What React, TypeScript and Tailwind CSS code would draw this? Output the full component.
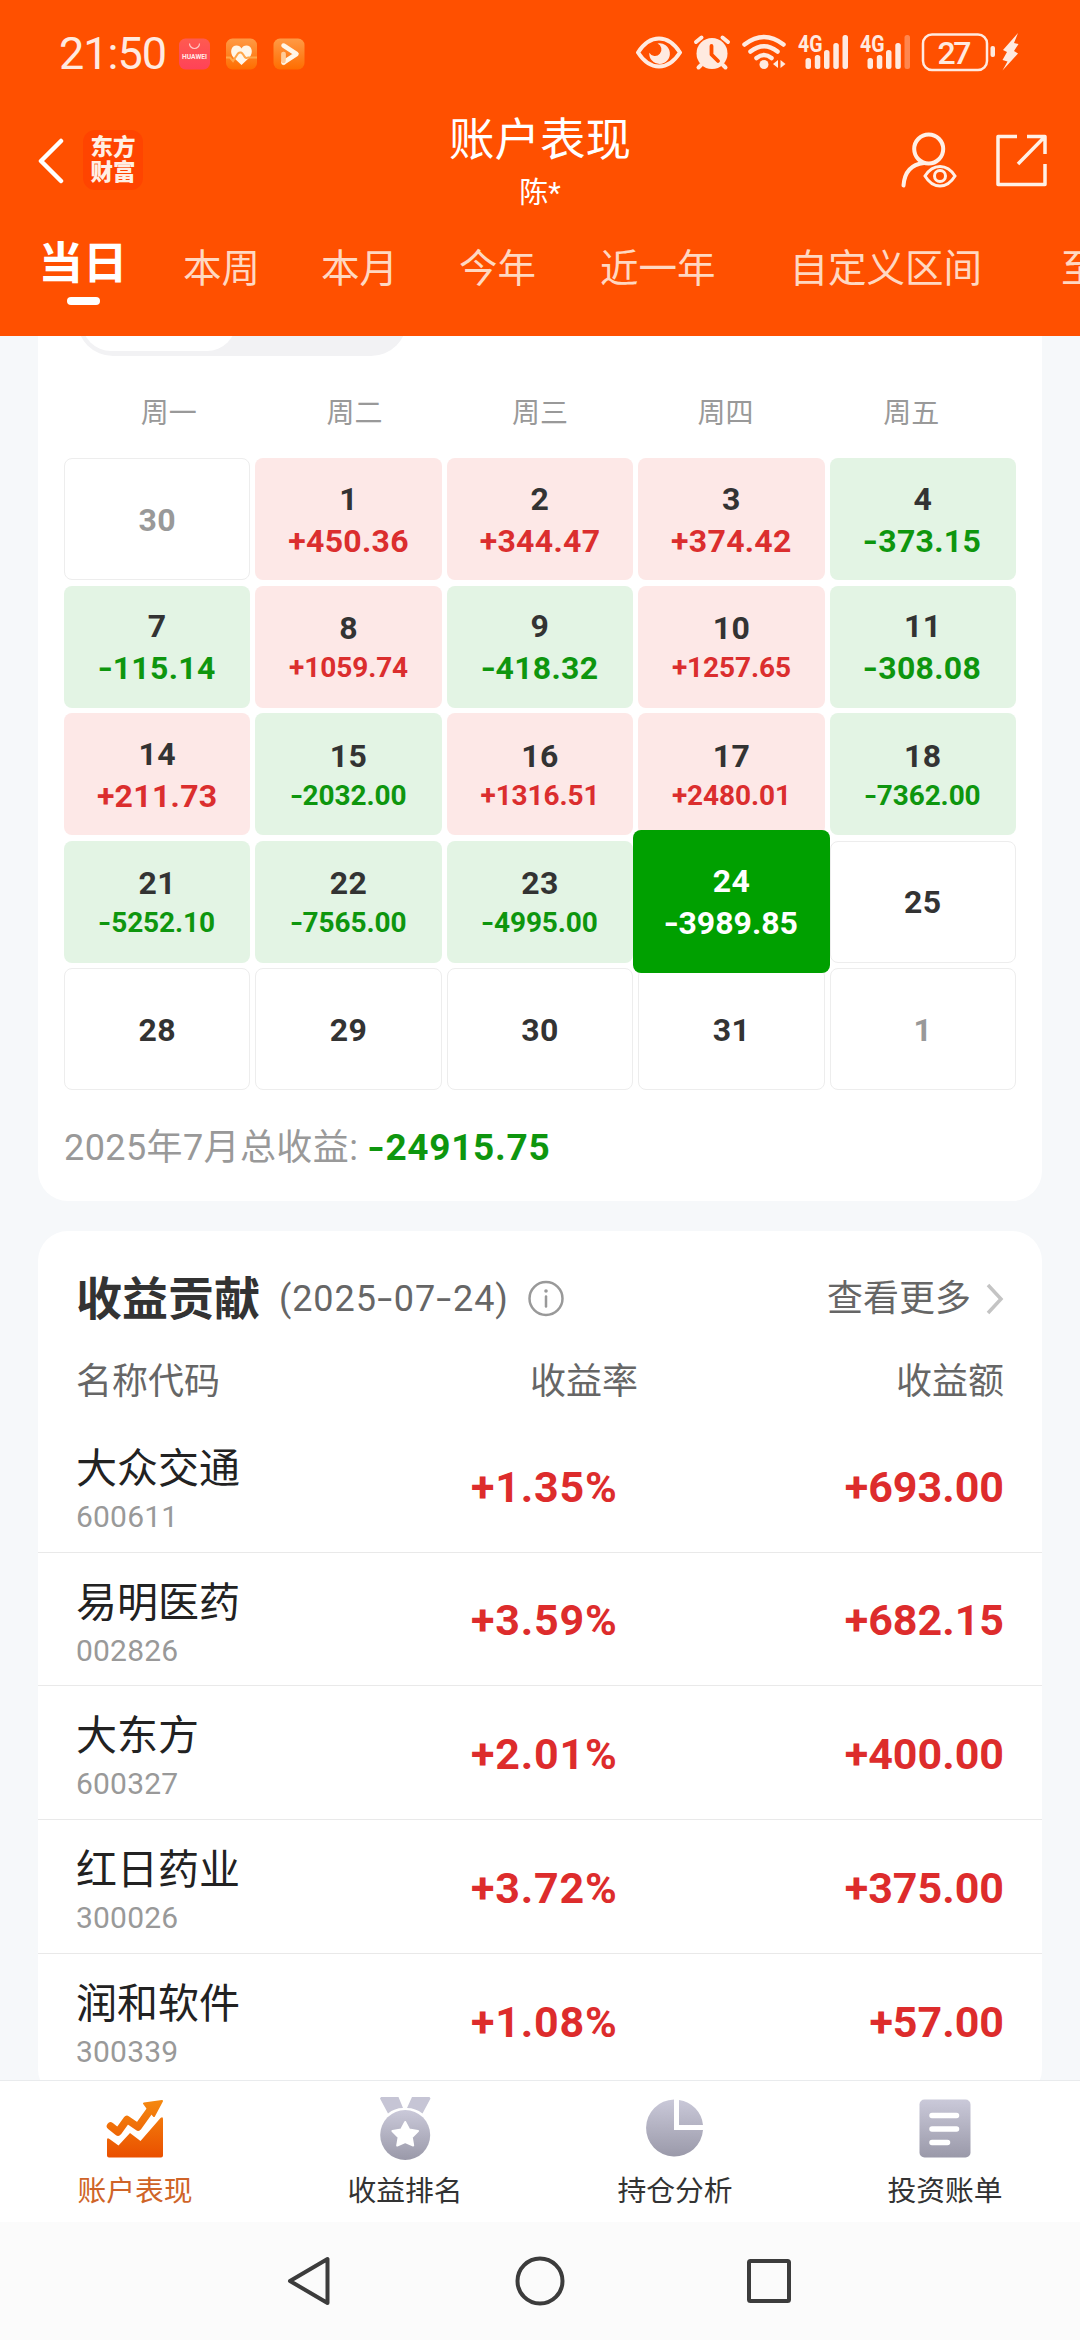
import React from "react";

const CJK = "font-['Roboto','Noto_Sans_CJK_SC',sans-serif]";

function StatusBar() {
  return (
    <div className="relative flex h-[108px] items-center justify-between pl-[59px] pr-[60px] text-[#ffeae0]">
      <div className="flex items-center">
        <span className="w-[120px] text-[45px] leading-[50px] tracking-[-1px]">21:50</span>
        <svg className="h-8 w-[126px]" viewBox="0 0 126 32">
          <defs>
            <linearGradient id="app" x1="0" y1="0" x2="0" y2="1">
              <stop offset="0" stopColor="#ff9a45" />
              <stop offset="1" stopColor="#ff6d00" />
            </linearGradient>
            <linearGradient id="shop" x1="0" y1="0" x2="0" y2="1">
              <stop offset="0" stopColor="#ff5a50" />
              <stop offset="1" stopColor="#ff4258" />
            </linearGradient>
          </defs>
          <rect x="0" y="0.5" width="31" height="31" rx="6.5" fill="url(#shop)" />
          <path d="M10.5 5.5a5 5 0 0 0 10 0" fill="none" stroke="#ffc9c4" strokeWidth="1.2" />
          <text x="15.5" y="20.5" textAnchor="middle" fontSize="6.3" fontWeight="700" fill="#ffe9e6" textLength="25" lengthAdjust="spacingAndGlyphs">HUAWEI</text>
          <rect x="47" y="0.5" width="31" height="31" rx="6.5" fill="url(#app)" />
          <path d="M62.500 27L54.500 19.500C50 14 52.500 7.500 57.500 7.500c2.500 0 4 1.200 5 3 1-1.800 2.500-3 5-3 5 0 7.500 6.500 3 12z" fill="#fff6e8" />
          <path d="M47 19.500h4l3 3.500 5-7.500c2-2 4-1 5.500 1.500 1.500 3 3 3.500 4.500 2.500h9" fill="none" stroke="#ffa648" strokeWidth="2" />
          <rect x="94.500" y="0.500" width="31" height="31" rx="6.500" fill="url(#app)" />
          <path d="M104.500 16v9" fill="none" stroke="#ffb56e" strokeWidth="4.500" strokeLinecap="round" />
          <path d="M104.500 7.500L117.500 16L104.500 24.500" fill="none" stroke="#fff6e8" strokeWidth="4.500" strokeLinecap="round" strokeLinejoin="round" />
          <path d="M104.500 16v7" fill="none" stroke="#ffcb98" strokeWidth="4.500" strokeLinecap="round" />
        </svg>
      </div>
      <svg className="h-[42px] w-[384px]" viewBox="635 33 384 42" fill="none" stroke="#ffeae0">
        <path d="M637 52.500q9-14 21-14t21 14q-9 14-21 14T637 52.500z" strokeWidth="4" strokeLinejoin="round" />
        <path d="M656.500 43.500a6.500 6.500 0 1 1-8.200 9.200a10.300 10.300 0 1 0 8.200-9.200z" fill="#ffeae0" stroke="none" />
        <g>
          <circle cx="711" cy="53.500" r="15.500" fill="#ffeae0" stroke="none" />
          <path d="M695 42l5.500-4.500M727 42l-5.500-4.500M700 65l-2.500 2.500M722 65l2.500 2.500" strokeWidth="4" strokeLinecap="round" />
          <path d="M710.500 46v8.500l6.500 6.500" stroke="#ff5000" strokeWidth="3.800" strokeLinecap="round" strokeLinejoin="round" />
        </g>
        <g strokeWidth="4.500" strokeLinecap="round">
          <path d="M743.500 44.500q19.500-15 39 0M749.500 51.500q13.500-10.500 27 0M755.500 58q7.500-6 15 0" />
          <circle cx="763" cy="64.500" r="4.500" fill="#ffeae0" stroke="none" />
          <path d="M777 60v8l-5-4zM779.500 68v-8l5 4z" fill="#ffeae0" stroke="none" />
        </g>
        <g stroke="none" fill="#ffeae0">
          <text x="797" y="51.500" fontSize="23" fontWeight="700" textLength="24.500" lengthAdjust="spacingAndGlyphs">4G</text>
          <rect x="804.500" y="58" width="5.500" height="11" rx="2.500" />
          <rect x="813.800" y="55" width="5.500" height="14" rx="2.500" />
          <rect x="823" y="50" width="5.500" height="19" rx="2.500" />
          <rect x="832.300" y="43" width="5.500" height="26" rx="2.500" />
          <rect x="841.500" y="35" width="5.500" height="34" rx="2.500" />
          <text x="859" y="51.500" fontSize="23" fontWeight="700" textLength="24.500" lengthAdjust="spacingAndGlyphs">4G</text>
          <rect x="866.500" y="58" width="5.500" height="11" rx="2.500" />
          <rect x="875.800" y="55" width="5.500" height="14" rx="2.500" />
          <rect x="885" y="50" width="5.500" height="19" rx="2.500" />
          <rect x="894.300" y="43" width="5.500" height="26" rx="2.500" />
          <rect x="903.500" y="35" width="5.500" height="34" rx="2.500" opacity="0.35" />
          <text x="953.500" y="63.500" textAnchor="middle" fontSize="32" fontWeight="500" textLength="34">27</text>
          <rect x="989.500" y="46" width="4.500" height="11" rx="2" />
          <path d="M1017 33l-15 17 4 2-4.500 8 5 1.500-5 9 15.500-17-4-2.500 4.500-7-4.500-1z" />
        </g>
        <rect x="922" y="34.500" width="64" height="35.500" rx="9" strokeWidth="2.500" />
      </svg>
    </div>
  );
}

function Header() {
  return (
    <header className="flex h-[336px] flex-none flex-col overflow-hidden bg-[#ff5000] text-white">
      <StatusBar />
      <div className="relative flex h-[104px] items-center justify-between pl-[36px] pr-[31px]">
        <div className="flex items-center">
          <svg className="h-[48px] w-[30px]" viewBox="0 0 30 48" fill="none" stroke="#fff" strokeWidth="4.500" strokeLinecap="round" strokeLinejoin="round">
            <path d="M25 5L5 25L25 45" />
          </svg>
          <div className="ml-[17px] flex h-[60px] w-[60px] flex-col items-center justify-center rounded-xl bg-[#ff4400] text-[22.5px] leading-[25.5px] font-black text-[#ffefe4]">
            <span>东方</span>
            <span>财富</span>
          </div>
        </div>
        <div className="absolute inset-x-0 top-[3px] flex flex-col items-center">
          <h1 className="h-[59px] text-[45.500px] leading-[60px]">账户表现</h1>
          <span className="text-[29px] leading-[46px]">陈*</span>
        </div>
        <div className="flex items-center gap-[37px]">
          <svg className="h-[58px] w-[58px]" viewBox="900 131 58 58" fill="none" stroke="#fff0e6" strokeWidth="4" strokeLinecap="round">
            <circle cx="928.700" cy="149" r="14.500" />
            <path d="M903.500 185.500Q905 165 924 163" />
            <path d="M925 176q6-9.500 15-9.500t15 9.500q-6 10-15 10t-15-10z" strokeWidth="3" />
            <circle cx="940" cy="176" r="5.500" strokeWidth="3" />
          </svg>
          <svg className="h-[54px] w-[54px]" viewBox="995 133 54 54" fill="none" stroke="#fff0e6" strokeWidth="3.500" strokeLinecap="butt" strokeLinejoin="round">
            <path d="M1017 136.500H998V184.500H1045V164M1027 136.500H1045V154M1045 136.500L1018 164" />
          </svg>
        </div>
      </div>
      <nav className="flex h-[124px] pt-[29px] text-[38.500px] leading-[56px] whitespace-nowrap text-[#ffd8c2]">
        <div className="ml-[39px] flex w-[88px] flex-col items-center">
          <span className="mt-px text-[44.500px] leading-[44px] font-bold text-white">当日</span>
          <span className="mt-[11px] h-2 w-[33px] rounded-full bg-white" />
        </div>
        <span className="ml-[56px]">本周</span>
        <span className="ml-[61px]">本月</span>
        <span className="ml-[61px]">今年</span>
        <span className="ml-[64px]">近一年</span>
        <span className="ml-[74px]">自定义区间</span>
        <span className="ml-[79px]">至</span>
      </nav>
    </header>
  );
}

function Amount({ text }: { text: string }) {
  if (!text.startsWith("-")) return <>{text}</>;
  return (
    <>
      <span className="mr-[0.03em] inline-block scale-x-125">-</span>
      {text.slice(1)}
    </>
  );
}

type Day = { d: string; v?: string; muted?: boolean; selected?: boolean };

const days: Day[] = [
  { d: "30", muted: true }, { d: "1", v: "+450.36" }, { d: "2", v: "+344.47" }, { d: "3", v: "+374.42" }, { d: "4", v: "-373.15" },
  { d: "7", v: "-115.14" }, { d: "8", v: "+1059.74" }, { d: "9", v: "-418.32" }, { d: "10", v: "+1257.65" }, { d: "11", v: "-308.08" },
  { d: "14", v: "+211.73" }, { d: "15", v: "-2032.00" }, { d: "16", v: "+1316.51" }, { d: "17", v: "+2480.01" }, { d: "18", v: "-7362.00" },
  { d: "21", v: "-5252.10" }, { d: "22", v: "-7565.00" }, { d: "23", v: "-4995.00" }, { d: "24", v: "-3989.85", selected: true }, { d: "25" },
  { d: "28" }, { d: "29" }, { d: "30" }, { d: "31" }, { d: "1", muted: true },
];

function DayCell({ day }: { day: Day }) {
  const base = "flex flex-col items-center justify-center rounded-lg text-[32px] font-bold ";
  if (!day.v) {
    return (
      <div className={base + "border border-[#ededed] bg-white pt-px leading-[42px] tracking-[0.4px] " + (day.muted ? "text-[#999]" : "text-[#333]")}>{day.d}</div>
    );
  }
  if (day.selected) {
    return (
      <div className={base + "z-10 -mx-[5.500px] -my-[10.500px] bg-[#00a000] leading-[42px] text-white"}>
        <span className="tracking-[0.4px]">{day.d}</span>
        <span><Amount text={day.v} /></span>
      </div>
    );
  }
  const up = day.v.startsWith("+");
  const small = day.v.length > 7;
  return (
    <div className={base + "pt-px " + (up ? "bg-[#fde8e7]" : "bg-[#e3f4e4]")}>
      <span className="leading-[42px] tracking-[0.4px] text-[#333]">{day.d}</span>
      <span className={(small ? "text-[28px] leading-[38px] tracking-[-0.1px] " : "leading-[42px] tracking-[0.3px] ") + (up ? "text-[#db2e2e]" : "text-[#0e960e]")}>
        <Amount text={day.v} />
      </span>
    </div>
  );
}

function CalendarCard() {
  return (
    <section className="mx-[38px] h-[865px] flex-none rounded-b-[30px] bg-white">
      <div className="h-5 overflow-hidden pl-[39px]">
        <div className="-mt-[52px] h-[72px] w-[330px] rounded-full bg-[#f2f2f4] px-[5px] pt-[5px]">
          <div className="h-[62px] w-[154px] rounded-[29px] bg-white" />
        </div>
      </div>
      <div className="mx-[38px] mt-[38px] grid h-10 grid-cols-5 text-center text-[28px] leading-10 text-[#999]">
        <span>周一</span><span>周二</span><span>周三</span><span>周四</span><span>周五</span>
      </div>
      <div className="mx-[26px] mt-[24px] grid h-[632px] grid-cols-5 grid-rows-5 gap-x-[5px] gap-y-[5.500px]">
        {days.map((day, i) => <DayCell key={i} day={day} />)}
      </div>
      <div className="ml-[26px] mt-[33px] flex items-baseline text-[36px] leading-[50px] whitespace-nowrap text-[#999]">
        <span className="w-[305px] tracking-[0.4px]">2025年7月总收益:</span>
        <span className="text-[37px] font-bold tracking-[0.7px] text-[#0e960e]"><Amount text="-24915.75" /></span>
      </div>
    </section>
  );
}

const stocks = [
  ["大众交通", "600611", "+1.35%", "+693.00"],
  ["易明医药", "002826", "+3.59%", "+682.15"],
  ["大东方", "600327", "+2.01%", "+400.00"],
  ["红日药业", "300026", "+3.72%", "+375.00"],
  ["润和软件", "300339", "+1.08%", "+57.00"],
];

function DateLabel({ date }: { date: string }) {
  return (
    <span className="w-[248px] tracking-[0.9px]">
      (
      {date.split("-").map((part, i) => (
        <React.Fragment key={i}>
          {i > 0 && <span className="inline-block w-[17px] scale-x-150 text-center">-</span>}
          {part}
        </React.Fragment>
      ))}
      )
    </span>
  );
}

function ContributionCard() {
  return (
    <section className="mx-[38px] mt-[30px] h-[868px] flex-none rounded-[30px] bg-white">
      <div className="flex h-[126px] items-center pt-[10px] pr-[36px] pl-[38px] text-[36px] whitespace-nowrap text-[#666]">
        <h2 className="w-[203px] text-[46px] font-bold text-[#333]">收益贡献</h2>
        <DateLabel date="2025-07-24" />
        <svg className="h-[38px] w-[38px]" viewBox="0 0 38 38" fill="none" stroke="#999" strokeWidth="2.500" strokeLinecap="round">
          <circle cx="19" cy="18.500" r="16.500" />
          <path d="M19 16.500v10" />
          <circle cx="19" cy="11" r="1.800" fill="#999" stroke="none" />
        </svg>
        <span className="ml-auto">查看更多</span>
        <svg className="ml-[11px] h-8 w-6" viewBox="0 0 24 32" fill="none" stroke="#c4c4c4" strokeWidth="3.500">
          <path d="M6 2l13 14-13 14" />
        </svg>
      </div>
      <div className="grid h-[62px] grid-cols-[1fr_200px_402px] px-[38px] pt-[2px] text-[36px] leading-[46px] text-[#666]">
        <span>名称代码</span>
        <span className="text-right -mr-[36px]">收益率</span>
        <span className="text-right">收益额</span>
      </div>
      {stocks.map(([name, code, rate, amount], i) => (
        <div key={code} className={"flex h-[133.700px] items-center px-[38px] " + (i < 4 ? "border-b border-[#e9e9e9]" : "")}>
          <div className="w-[395px] pt-[10px]">
            <div className="text-[41px] leading-[52px] text-[#222]">{name}</div>
            <div className="text-[30px] leading-[43px] tracking-[0.2px] text-[#999]">{code}</div>
          </div>
          <span className="pt-[3px] text-[43px] font-bold tracking-[0.8px] text-[#dd2c2c]">{rate}</span>
          <span className="ml-auto pt-[3px] text-[43px] font-bold text-[#dd2c2c]">{amount}</span>
        </div>
      ))}
    </section>
  );
}

function TabBar() {
  return (
    <nav className="grid h-[142px] flex-none grid-cols-4 border-t border-[#e9ebed] bg-white text-[28.800px] text-[#333]">
      <div className="flex flex-col items-center pt-3">
        <svg className="h-[68px] w-[68px]" viewBox="101 2092 68 68">
          <defs>
            <linearGradient id="hot" x1="0" y1="2098" x2="0" y2="2156" gradientUnits="userSpaceOnUse">
              <stop offset="0" stopColor="#f58a10" />
              <stop offset="1" stopColor="#ea5000" />
            </linearGradient>
            <linearGradient id="cool" x1="0" y1="0" x2="0" y2="1">
              <stop offset="0" stopColor="#cac9d9" />
              <stop offset="1" stopColor="#9a99a9" />
            </linearGradient>
          </defs>
          <path d="M110.500 2125L118 2131L127 2118.500L138 2126L152 2106.500" fill="none" stroke="url(#hot)" strokeWidth="7.500" strokeLinecap="round" strokeLinejoin="round" />
          <path d="M144 2102.500L162 2100L154 2115L148 2108Z" fill="url(#hot)" stroke="url(#hot)" strokeWidth="2" strokeLinejoin="round" />
          <path d="M107 2139q0-3 2.500-1l9 6.500L130 2132L140.500 2140L160.500 2117q2.500-2 2.500 1V2154.500q0 2-2 2H109q-2 0-2-2z" fill="url(#hot)" />
        </svg>
        <span className="mt-[9px] leading-[42px] text-[#cf6428]">账户表现</span>
      </div>
      <div className="flex flex-col items-center pt-3">
        <svg className="h-[68px] w-[68px]" viewBox="371.500 2092 68 68">
          <path d="M381.500 2096H399L403.500 2107Q395 2107 388.500 2112.500L380.500 2097.500zM430 2096H412.500L407.500 2107Q416 2107 423 2112.500L431 2097.500z" fill="#c6c5d5" />
          <circle cx="405.700" cy="2134" r="25" fill="url(#cool)" />
          <path d="M405.700 2121L409.800 2128.600L418.500 2130L412.300 2136.200L413.700 2144.500L405.700 2141L397.700 2144.500L399.100 2136.200L392.900 2130L401.600 2128.600Z" fill="#fff" stroke="#fff" strokeWidth="2" strokeLinejoin="round" />
        </svg>
        <span className="mt-[9px] leading-[42px]">收益排名</span>
      </div>
      <div className="flex flex-col items-center pt-3">
        <svg className="h-[68px] w-[68px]" viewBox="641 2092 68 68">
          <defs>
            <linearGradient id="pie" x1="0" y1="2098" x2="0" y2="2156" gradientUnits="userSpaceOnUse">
              <stop offset="0" stopColor="#cac9d9" />
              <stop offset="1" stopColor="#9a99a9" />
            </linearGradient>
          </defs>
          <path d="M674 2098.500A28.500 28.500 0 1 0 703 2129H674zM679 2099V2124H703A28 28 0 0 0 679 2099z" fill="url(#pie)" />
        </svg>
        <span className="mt-[9px] leading-[42px]">持仓分析</span>
      </div>
      <div className="flex flex-col items-center pt-3">
        <svg className="h-[68px] w-[68px]" viewBox="911 2092 68 68">
          <rect x="919.500" y="2098.500" width="51" height="58" rx="5" fill="url(#cool)" />
          <path d="M932 2114.500h24.500M932 2128h24.500M932 2141.500h15.500" stroke="#fff" strokeWidth="5.500" strokeLinecap="round" />
        </svg>
        <span className="mt-[9px] leading-[42px]">投资账单</span>
      </div>
    </nav>
  );
}

function SystemNav() {
  return (
    <div className="flex h-[118px] flex-none items-center justify-between bg-[#fbfbfb] px-[284px]">
      <svg className="h-[52px] w-[50px]" viewBox="284 2255 50 52" fill="none" stroke="#3c3c3c" strokeWidth="4" strokeLinejoin="round">
        <path d="M327.500 2259V2303L290 2281z" />
      </svg>
      <svg className="ml-[2px] h-[52px] w-[52px]" viewBox="0 0 52 52" fill="none" stroke="#3c3c3c" strokeWidth="4">
        <circle cx="26" cy="26" r="22.500" />
      </svg>
      <svg className="h-[52px] w-[52px]" viewBox="0 0 52 52" fill="none" stroke="#3c3c3c" strokeWidth="4" strokeLinejoin="round">
        <rect x="5" y="6" width="40" height="40" rx="1.500" />
      </svg>
    </div>
  );
}

export default function App() {
  return (
    <div className={"flex h-[2340px] w-[1080px] flex-col overflow-hidden bg-[#f6f8fa] " + CJK}>
      <Header />
      <main className="flex h-[1744px] flex-none flex-col overflow-hidden">
        <CalendarCard />
        <ContributionCard />
      </main>
      <TabBar />
      <SystemNav />
    </div>
  );
}
